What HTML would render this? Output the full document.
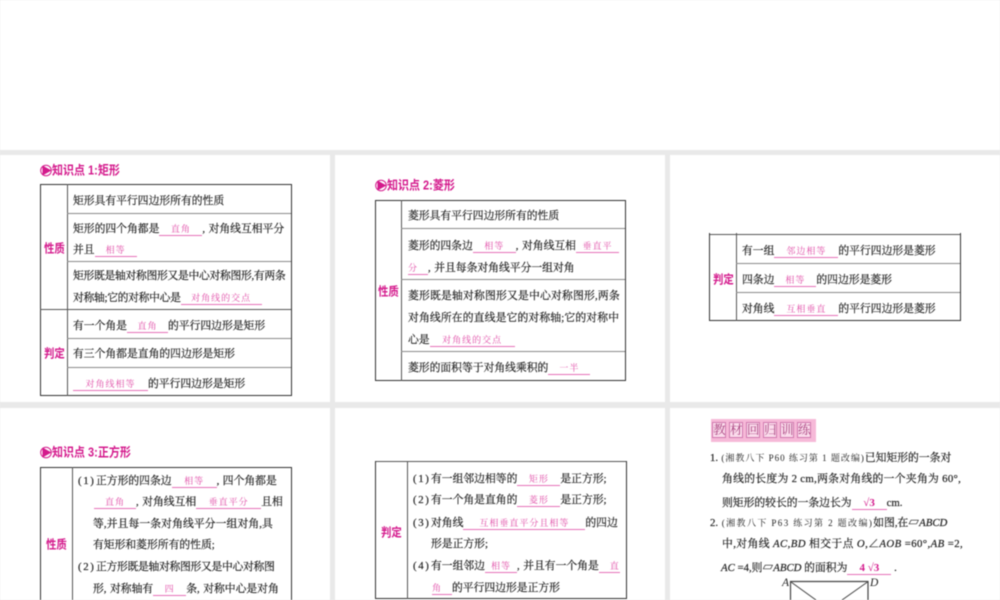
<!DOCTYPE html>
<html><head><meta charset="utf-8">
<style>
html,body{margin:0;padding:0;background:#e9e9e9;}
#s{position:relative;width:1000px;height:600px;overflow:hidden;background:#e9e9e9;font-family:"Liberation Serif","Noto Serif CJK SC",serif;font-size:10.8px;color:#222;filter:blur(.45px);}
.p{position:absolute;background:#fff;}
.l{position:absolute;white-space:nowrap;line-height:16px;height:16px;margin-top:1px;-webkit-text-stroke:.2px #222;}
.b{display:inline-block;border-bottom:1px solid #e670b8;color:#e04aa6;font-size:9px;line-height:12px;height:12px;text-align:center;letter-spacing:1px;vertical-align:baseline;-webkit-text-stroke:0;}
.h{position:absolute;height:1px;background:#8a8a8a;}
.v{position:absolute;width:1px;background:#555;}
.d{background:#333;}
.k{position:absolute;color:#d4198c;font-family:"Liberation Sans","Noto Sans CJK SC",sans-serif;font-weight:700;font-size:11px;line-height:16px;white-space:nowrap;transform:scaleY(1.15);transform-origin:left center;}
.t{position:absolute;white-space:nowrap;line-height:14px;color:#d4198c;font-family:"Liberation Sans","Noto Sans CJK SC",sans-serif;font-weight:700;font-size:10.4px;transform:scaleY(1.15);}
.m{font-size:9px;letter-spacing:1px;-webkit-text-stroke:0;}
.c{padding-right:3.5px;}
.n{display:inline-block;width:18px;letter-spacing:1.6px;}
i{font-style:italic;}
.bx{display:inline-block;width:12px;height:14px;border:1px solid #d078ae;background:#fbdcec;color:#a8417f;font-size:12.5px;line-height:14px;text-align:center;margin-right:3px;overflow:hidden;}
</style></head><body>
<div id="s">
<div class="p" style="left:0;top:0;width:1000px;height:150px"></div>
<div class="p" style="left:0;top:155px;width:330px;height:247px"></div>
<div class="p" style="left:335px;top:155px;width:330px;height:247px"></div>
<div class="p" style="left:670px;top:155px;width:330px;height:247px"></div>
<div class="p" style="left:0;top:408px;width:330px;height:192px"></div>
<div class="p" style="left:335px;top:408px;width:330px;height:192px"></div>
<div class="p" style="left:670px;top:408px;width:330px;height:192px"></div>

<!-- Table 1 -->
<svg style="position:absolute;left:40px;top:164px" width="13" height="13" viewBox="0 0 13 13"><circle cx="6" cy="6.5" r="5.3" fill="none" stroke="#d4198c" stroke-width="1"/><path d="M2.5 1.5L11.5 6.5L2.5 11.5Z" fill="#d4198c"/></svg>
<div class="k" style="left:52px;top:163px">知识点 1:矩形</div>
<div class="d h" style="left:40px;top:184px;width:252px"></div>
<div class="d h" style="left:40px;top:395px;width:252px"></div>
<div class="v d" style="left:40px;top:184px;height:212px"></div>
<div class="v d" style="left:291px;top:184px;height:212px"></div>
<div class="v" style="left:67px;top:184px;height:212px"></div>
<div class="h" style="left:67px;top:213px;width:224px"></div>
<div class="h" style="left:67px;top:261px;width:224px"></div>
<div class="h" style="left:40px;top:309px;width:251px;background:#555"></div>
<div class="h" style="left:67px;top:338px;width:224px"></div>
<div class="h" style="left:67px;top:367px;width:224px"></div>
<div class="t" style="left:44px;top:243px">性质</div>
<div class="t" style="left:44px;top:348px">判定</div>
<div class="l" style="left:73px;top:192px">矩形具有平行四边形所有的性质</div>
<div class="l" style="left:73px;top:220px">矩形的四个角都是<span class="b" style="width:43px">直角</span><span class="c">,</span>对角线互相平分</div>
<div class="l" style="left:73px;top:241px">并且<span class="b" style="width:42px">相等</span></div>
<div class="l" style="left:73px;top:267px;letter-spacing:-.3px">矩形既是轴对称图形又是中心对称图形,有两条</div>
<div class="l" style="left:73px;top:289px"><span style="letter-spacing:-.3px">对称轴;它的对称中心是</span><span class="b" style="width:81px">对角线的交点</span></div>
<div class="l" style="left:73px;top:317px">有一个角是<span class="b" style="width:41px">直角</span>的平行四边形是矩形</div>
<div class="l" style="left:73px;top:345px">有三个角都是直角的四边形是矩形</div>
<div class="l" style="left:73px;top:375px"><span class="b" style="width:75px">对角线相等</span>的平行四边形是矩形</div>

<!-- Table 2 -->
<svg style="position:absolute;left:375px;top:179px" width="13" height="13" viewBox="0 0 13 13"><circle cx="6" cy="6.5" r="5.3" fill="none" stroke="#d4198c" stroke-width="1"/><path d="M2.5 1.5L11.5 6.5L2.5 11.5Z" fill="#d4198c"/></svg>
<div class="k" style="left:387px;top:178px">知识点 2:菱形</div>
<div class="d h" style="left:375px;top:200px;width:251px"></div>
<div class="d h" style="left:375px;top:380px;width:251px"></div>
<div class="v d" style="left:375px;top:200px;height:181px"></div>
<div class="v d" style="left:625px;top:200px;height:181px"></div>
<div class="v" style="left:401px;top:200px;height:181px"></div>
<div class="h" style="left:401px;top:228px;width:224px"></div>
<div class="h" style="left:401px;top:279px;width:224px"></div>
<div class="h" style="left:401px;top:351px;width:224px"></div>
<div class="t" style="left:378px;top:286px">性质</div>
<div class="l" style="left:408px;top:207px">菱形具有平行四边形所有的性质</div>
<div class="l" style="left:408px;top:237px">菱形的四条边<span class="b" style="width:43px">相等</span><span class="c">,</span>对角线互相<span class="b" style="width:43px">垂直平</span></div>
<div class="l" style="left:408px;top:259px"><span class="b" style="width:20px;text-align:left">分</span><span class="c">,</span>并且每条对角线平分一组对角</div>
<div class="l" style="left:408px;top:287px;letter-spacing:.2px">菱形既是轴对称图形又是中心对称图形,两条</div>
<div class="l" style="left:408px;top:309px;letter-spacing:.15px">对角线所在的直线是它的对称轴;它的对称中</div>
<div class="l" style="left:408px;top:331px">心是<span class="b" style="width:85px">对角线的交点</span></div>
<div class="l" style="left:408px;top:359px">菱形的面积等于对角线乘积的<span class="b" style="width:42px">一半</span></div>

<!-- Table 3 -->
<div class="h" style="left:709px;top:234px;width:252px;background:#555"></div>
<div class="d h" style="left:709px;top:320px;width:252px"></div>
<div class="v d" style="left:709px;top:233px;height:88px"></div>
<div class="v d" style="left:960px;top:233px;height:88px"></div>
<div class="v" style="left:736px;top:233px;height:88px"></div>
<div class="h" style="left:736px;top:263px;width:224px"></div>
<div class="h" style="left:736px;top:292px;width:224px"></div>
<div class="t" style="left:713px;top:274px">判定</div>
<div class="l" style="left:742px;top:242px">有一组<span class="b" style="width:64px">邻边相等</span>的平行四边形是菱形</div>
<div class="l" style="left:742px;top:271px">四条边<span class="b" style="width:42px">相等</span>的四边形是菱形</div>
<div class="l" style="left:742px;top:300px">对角线<span class="b" style="width:64px">互相垂直</span>的平行四边形是菱形</div>

<!-- Table 4 -->
<svg style="position:absolute;left:40px;top:446px" width="13" height="13" viewBox="0 0 13 13"><circle cx="6" cy="6.5" r="5.3" fill="none" stroke="#d4198c" stroke-width="1"/><path d="M2.5 1.5L11.5 6.5L2.5 11.5Z" fill="#d4198c"/></svg>
<div class="k" style="left:52px;top:445px">知识点 3:正方形</div>
<div class="d h" style="left:40px;top:467px;width:252px"></div>
<div class="v d" style="left:40px;top:467px;height:133px"></div>
<div class="v d" style="left:291px;top:467px;height:133px"></div>
<div class="v" style="left:72px;top:467px;height:133px"></div>
<div class="t" style="left:46px;top:539px">性质</div>
<div class="l" style="left:78px;top:472px"><span class="n">(1)</span>正方形的四条边<span class="b" style="width:45px">相等</span><span class="c">,</span>四个角都是</div>
<div class="l" style="left:94px;top:493px"><span class="b" style="width:42px">直角</span><span class="c">,</span>对角线互相<span class="b" style="width:65px">垂直平分</span>且相</div>
<div class="l" style="left:93px;top:515px;letter-spacing:.1px">等,并且每一条对角线平分一组对角,具</div>
<div class="l" style="left:93px;top:536px">有矩形和菱形所有的性质;</div>
<div class="l" style="left:78px;top:558px;letter-spacing:-.3px"><span class="n">(2)</span>正方形既是轴对称图形又是中心对称图</div>
<div class="l" style="left:93px;top:580px">形<span class="c">,</span>对称轴有<span class="b" style="width:33px">四</span>条<span class="c">,</span>对称中心是对角</div>

<!-- Table 5 -->
<div class="h" style="left:375px;top:461px;width:252px;background:#555"></div>
<div class="d h" style="left:375px;top:598px;width:252px"></div>
<div class="v d" style="left:375px;top:461px;height:138px"></div>
<div class="v d" style="left:626px;top:461px;height:138px"></div>
<div class="v" style="left:407px;top:461px;height:138px"></div>
<div class="t" style="left:381px;top:527px">判定</div>
<div class="l" style="left:413px;top:470px"><span class="n">(1)</span>有一组邻边相等的<span class="b" style="width:43px">矩形</span>是正方形;</div>
<div class="l" style="left:413px;top:491px"><span class="n">(2)</span>有一个角是直角的<span class="b" style="width:43px">菱形</span>是正方形;</div>
<div class="l" style="left:413px;top:514px"><span class="n">(3)</span>对角线<span class="b" style="width:122px">互相垂直平分且相等</span>的四边</div>
<div class="l" style="left:431px;top:535px">形是正方形;</div>
<div class="l" style="left:413px;top:557px"><span class="n">(4)</span>有一组邻边<span class="b" style="width:32px">相等</span><span class="c">,</span>并且有一个角是<span class="b" style="width:21px;text-align:right">直</span></div>
<div class="l" style="left:432px;top:579px"><span class="b" style="width:20px;text-align:left">角</span>的平行四边形是正方形</div>

<!-- Panel 6 -->
<div style="position:absolute;left:711px;top:419px;width:105px;height:23px;background:#f6b9d8;white-space:nowrap;padding:3px 0 0 1px;box-sizing:border-box;line-height:15px;font-size:0"><span class="bx">教</span><span class="bx">材</span><span class="bx">回</span><span class="bx">归</span><span class="bx">训</span><span class="bx" style="margin:0">练</span></div>
<div class="l" style="left:710px;top:449px">1.<span class="m"> (湘教八下 P60 练习第 1 题改编)</span>已知矩形的一条对</div>
<div class="l" style="left:722px;top:470px;letter-spacing:.3px">角线的长度为 2 cm,两条对角线的一个夹角为 60°,</div>
<div class="l" style="left:722px;top:494px">则矩形的较长的一条边长为<span class="b" style="width:35px;color:#d4198c;font-weight:700;font-size:11px;letter-spacing:0">√3</span>cm.</div>
<div class="l" style="left:710px;top:514px">2.<span class="m" style="letter-spacing:1.4px"> (湘教八下 P63 练习第 2 题改编)</span>如图,在▱<i>ABCD</i></div>
<div class="l" style="left:722px;top:535px;letter-spacing:.4px">中,对角线 <i>AC</i>,<i>BD</i> 相交于点 <i>O</i>,∠<i>AOB</i> =60°,<i>AB</i> =2,</div>
<div class="l" style="left:721px;top:559px"><i>AC</i> =4,则▱<i>ABCD</i> 的面积为<span class="b" style="width:44px;color:#d4198c;font-weight:700;font-size:11px;letter-spacing:0">4 √3</span> .</div>
<svg style="position:absolute;left:780px;top:574px" width="100" height="26" viewBox="0 0 100 26">
<path d="M10.5 26V7.5H88V26" fill="none" stroke="#444" stroke-width="1.2"/>
<path d="M11 8L36 26M87.5 8L62 26" fill="none" stroke="#444" stroke-width="1"/>
<text x="2" y="12" font-family="Liberation Serif" font-style="italic" font-size="11.5" fill="#222">A</text>
<text x="90" y="12" font-family="Liberation Serif" font-style="italic" font-size="11.5" fill="#222">D</text>
</svg>
</div>
</body></html>
